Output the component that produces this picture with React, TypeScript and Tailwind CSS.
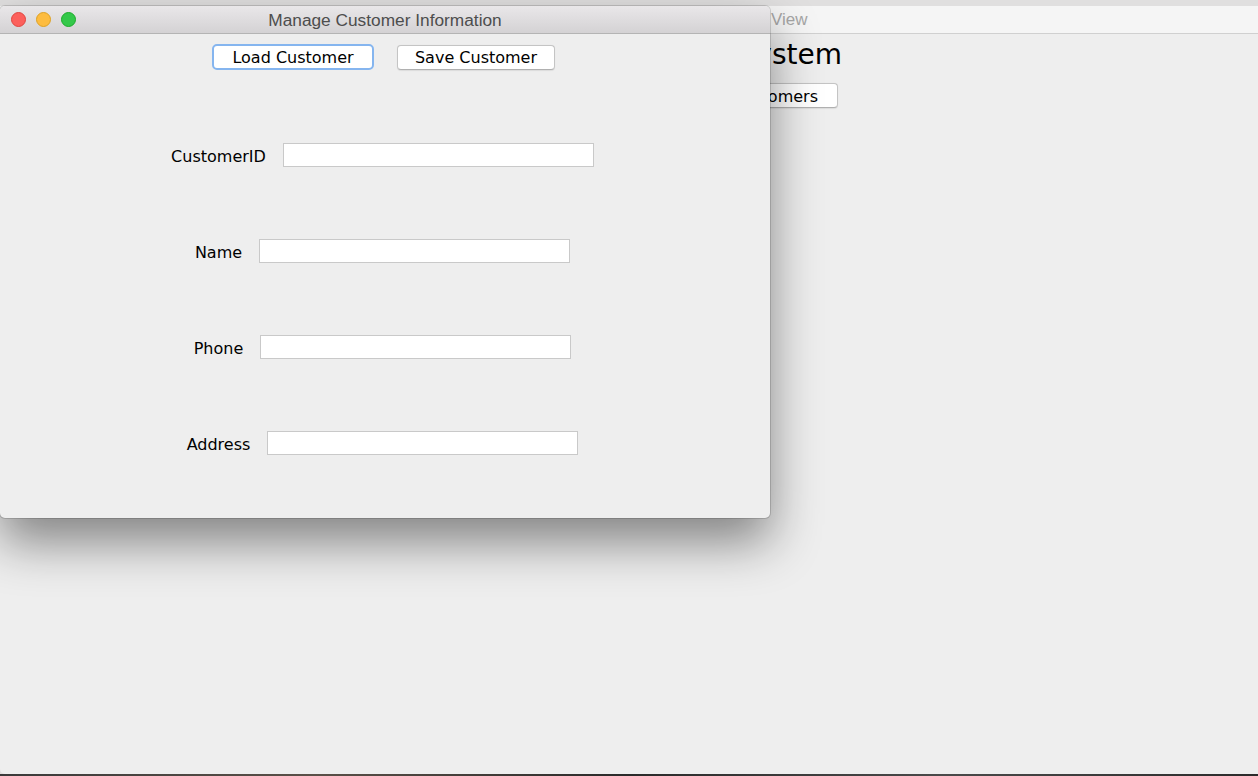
import React from "react";

const sans = { fontFamily: '"DejaVu Sans", "Noto Sans", sans-serif' };

function Field({ label }: { label: string }) {
  return (
    <div className="flex items-center justify-center gap-[17px] h-6">
      <span className="text-[16px] text-black leading-6 pt-[3px]">{label}</span>
      <div className="w-[311px] h-6 bg-white border border-[#c9c9c9]" />
    </div>
  );
}

function Btn({ children, focused, w }: { children: React.ReactNode; focused?: boolean; w?: string }) {
  return (
    <button
      className={
        (focused
          ? "h-[26px] pt-[2px] rounded-[5px] bg-white border-2 border-[#85b5ef] text-[16px] leading-none text-black shrink-0 whitespace-nowrap flex items-center justify-center "
          : "h-[25px] pt-[2px] rounded-[4px] bg-white border border-[#c4c4c4] border-b-[#b0b0b0] text-[16px] leading-none text-black shadow-[0_0.5px_1px_rgba(0,0,0,0.08)] shrink-0 whitespace-nowrap flex items-center justify-center ") +
        (w ?? "px-[19px]")
      }
    >
      {children}
    </button>
  );
}

export default function App() {
  return (
    <div className="w-[1258px] h-[776px] bg-[#e0dfdf] flex flex-col overflow-hidden relative" style={sans}>
      <div className="h-[6px] shrink-0" />
      {/* Background window */}
      <div className="flex-1 flex flex-col bg-[#eeeeee] rounded-bl-[5px]">
        <div className="h-[28px] shrink-0 bg-[#f5f5f5] border-b border-[#d0d0d0] flex items-center pl-[771px] pt-[1px]">
          <span className="text-[17px] text-[#a6a6a6]" style={{ fontFamily: '"Liberation Sans", sans-serif' }}>View</span>
        </div>
        <div className="w-[842px] text-right text-[28px] leading-[34px] mt-[4px] text-black whitespace-nowrap">
          Customer Management System
        </div>
        <div className="w-[838px] flex justify-end mt-[11px]">
          <Btn>View Customers</Btn>
        </div>
      </div>
      <div className="h-[2px] shrink-0 bg-[linear-gradient(90deg,#3a3a3a,#5a5048,#2a2a2a,#4a4a4a,#2b2b2b)]" />

      {/* Front window */}
      <div className="absolute left-0 top-[6px] w-[770px] h-[512px] rounded-[5px] bg-[#eeeeee] flex flex-col overflow-hidden shadow-[0_24px_50px_rgba(0,0,0,0.45),0_0_0_1px_rgba(0,0,0,0.14)]">
        <div className="h-[28px] shrink-0 relative flex items-center bg-[linear-gradient(#e9e7e9,#d4d2d4)] border-b border-[#b4b4b4]">
          <div className="flex items-center gap-[10px] pl-[11px]">
            <span className="w-[15px] h-[15px] rounded-full bg-[#fc605c] border border-[#e0443e]" />
            <span className="w-[15px] h-[15px] rounded-full bg-[#fdbc40] border border-[#dea123]" />
            <span className="w-[15px] h-[15px] rounded-full bg-[#34c84a] border border-[#1aab29]" />
          </div>
          <div className="absolute inset-0 flex items-center justify-center pt-[2px] text-[17.3px] text-[#4d4d4d]" style={{ fontFamily: '"Liberation Sans", sans-serif' }}>
            Manage Customer Information
          </div>
        </div>
        <div className="flex flex-col pr-[5px]">
          <div className="flex justify-center items-center gap-[23px] pt-[10px] h-[36px] pl-[2px]">
            <Btn focused w="w-[162px]">Load Customer</Btn>
            <Btn w="w-[158px]">Save Customer</Btn>
          </div>
          <div className="flex flex-col gap-[72px] mt-[73px]">
            <Field label="CustomerID" />
            <Field label="Name" />
            <Field label="Phone" />
            <Field label="Address" />
          </div>
        </div>
      </div>
    </div>
  );
}
